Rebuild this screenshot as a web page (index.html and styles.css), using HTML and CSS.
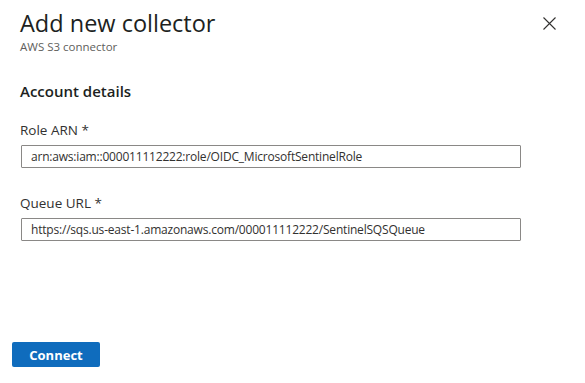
FILE: index.html
```html
<!DOCTYPE html>
<html lang="en">
<head>
  <meta charset="UTF-8">
  <meta name="viewport" content="width=device-width, initial-scale=1.0">
  <title>Add new collector</title>
  <link rel="stylesheet" href="styles.css">
</head>
<body>
  <div class="panel">
    <header class="panel-header">
      <div>
        <h1>Add new collector</h1>
        <div class="subtitle">AWS S3 connector</div>
      </div>
      <button class="close-btn" aria-label="Close">
        <svg width="13" height="13" viewBox="0 0 13 13">
          <path d="M0.5 0.5 L12.5 12.5 M12.5 0.5 L0.5 12.5" stroke="#323130" stroke-width="1.1" fill="none"/>
        </svg>
      </button>
    </header>

    <section class="panel-body">
      <h2>Account details</h2>
      <div class="field">
        <label for="role-arn">Role ARN *</label>
        <input type="text" id="role-arn" value="arn:aws:iam::000011112222:role/OIDC_MicrosoftSentinelRole">
      </div>
      <div class="field">
        <label for="queue-url">Queue URL *</label>
        <input type="text" id="queue-url" value="https://sqs.us-east-1.amazonaws.com/000011112222/SentinelSQSQueue">
      </div>
    </section>

    <footer class="panel-footer">
      <button class="primary-btn">Connect</button>
    </footer>
  </div>
</body>
</html>
```

FILE: styles.css
```css
body {
  font-family: "Open Sans", "Noto Sans", Arial, sans-serif;
  margin: 0;
  padding: 0;
  background-color: #fff;
  color: #323130;
}
.panel {
  height: 383px;
  display: flex;
  flex-direction: column;
}
.panel-header {
  display: flex;
  justify-content: space-between;
  align-items: flex-start;
  padding: 10px 29px 0 20px;
}
.panel-header h1 {
  margin: 0;
  font-size: 23.5px;
  font-weight: 400;
  line-height: 26px;
  color: #201f1e;
}
.subtitle {
  margin-top: 4px;
  font-size: 11.5px;
  line-height: 14px;
  color: #605e5c;
}
.close-btn {
  background: none;
  border: none;
  padding: 0;
  margin-top: 7px;
  width: 13px;
  height: 13px;
  cursor: pointer;
}
.close-btn svg {
  display: block;
}
.panel-body {
  flex: 1;
  padding: 0 20px;
}
.panel-body h2 {
  margin: 27px 0 0 0;
  font-size: 15px;
  font-weight: 600;
  line-height: 20px;
  color: #201f1e;
}
.field {
  margin-top: 20px;
}
.field + .field {
  margin-top: 26px;
}
.field label {
  display: block;
  font-size: 13.5px;
  line-height: 18px;
  margin-bottom: 5px;
}
.field input {
  box-sizing: border-box;
  width: 500px;
  height: 23px;
  margin-left: 1px;
  padding: 0 9px;
  border: 1px solid #8a8886;
  border-radius: 1px;
  font-family: inherit;
  font-size: 12px;
  letter-spacing: -0.2px;
  color: #323130;
}
.panel-footer {
  padding: 0 12px 16px 12px;
}
.primary-btn {
  width: 88px;
  height: 25px;
  background-color: #0f6cbd;
  color: #fff;
  border: none;
  border-radius: 2px;
  font-family: inherit;
  font-size: 13px;
  font-weight: 700;
  cursor: pointer;
}
```
